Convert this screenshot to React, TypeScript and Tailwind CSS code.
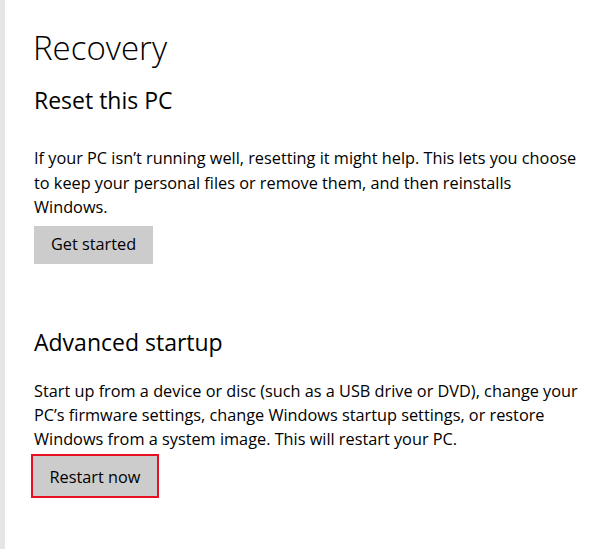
export default function App() {
  return (
    <div className="flex h-[549px] w-[600px] bg-white text-black" style={{ fontFamily: '"Open Sans", "Noto Sans", sans-serif' }}>
      {/* nav pane edge */}
      <div className="w-[5px] shrink-0 bg-[#e6e6e6]" />

      <main className="flex-1 pl-[28px] pt-[26px]">
        <h1 className="text-[33px] font-light leading-[44px]">Recovery</h1>

        <section className="mt-[14px]">
          <h2 className="pl-px text-[23px] leading-[32px]">Reset this PC</h2>
          <p className="mt-[30px] pl-px text-[16.3px] leading-[24.5px] whitespace-nowrap">
            If your PC isn’t running well, resetting it might help. This lets you choose
            <br />
            to keep your personal files or remove them, and then reinstalls
            <br />
            Windows.
          </p>
          <button className="ml-px mt-[6px] h-[38px] w-[119px] bg-[#cccccc] text-[16.3px]">Get started</button>
        </section>

        <section className="mt-[62px]">
          <h2 className="pl-px text-[23px] leading-[32px]">Advanced startup</h2>
          <p className="mt-[21px] pl-px text-[16.3px] leading-[24px] whitespace-nowrap">
            Start up from a device or disc (such as a USB drive or DVD), change your
            <br />
            PC’s firmware settings, change Windows startup settings, or restore
            <br />
            Windows from a system image. This will restart your PC.
          </p>
          <button className="-ml-[2px] mt-[3px] h-[44px] w-[128px] border-2 border-[#e81123] bg-[#cccccc] pt-[4px] text-[16.3px]">
            Restart now
          </button>
        </section>
      </main>
    </div>
  );
}
